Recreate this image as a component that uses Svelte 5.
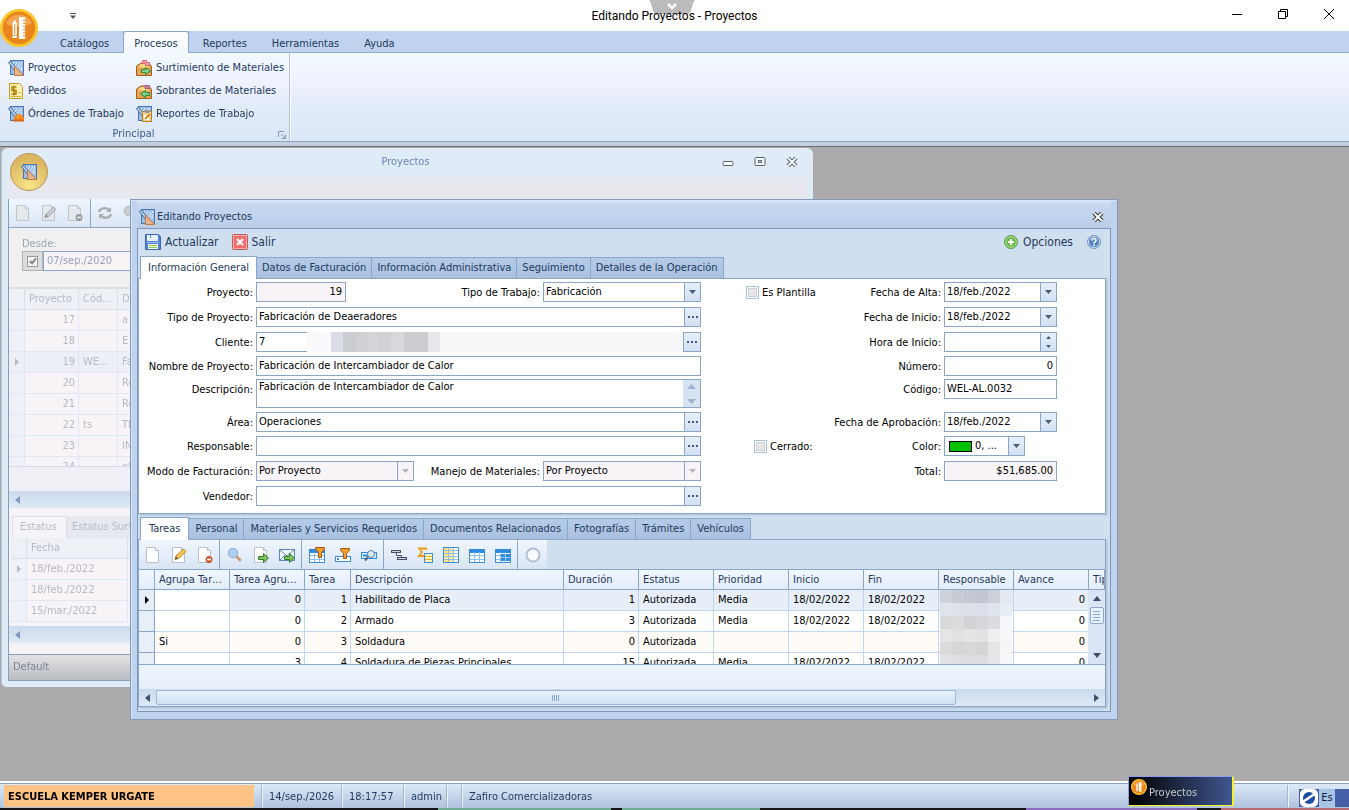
<script>
  let menuActivo = $state('Procesos');
  let seccionActiva = $state('Información General');
  let detalleActivo = $state('Tareas');

  const menus = ['Catálogos', 'Procesos', 'Reportes', 'Herramientas', 'Ayuda'];

  const principal = [
    { icono: 'proyecto', texto: 'Proyectos' },
    { icono: 'entrada', texto: 'Surtimiento de Materiales' },
    { icono: 'pedido', texto: 'Pedidos' },
    { icono: 'salida', texto: 'Sobrantes de Materiales' },
    { icono: 'orden', texto: 'Órdenes de Trabajo' },
    { icono: 'reporte', texto: 'Reportes de Trabajo' }
  ];

  const secciones = [
    'Información General',
    'Datos de Facturación',
    'Información Administrativa',
    'Seguimiento',
    'Detalles de la Operación'
  ];

  const detalles = [
    'Tareas',
    'Personal',
    'Materiales y Servicios Requeridos',
    'Documentos Relacionados',
    'Fotografías',
    'Trámites',
    'Vehículos'
  ];

  const herramientas = [
    ['nuevo', 'editar', 'borrar'],
    ['buscar', 'exportar', 'correo'],
    ['filtro', 'filtroFila', 'buscarFila'],
    ['agrupar', 'suma', 'columnas', 'tabla', 'tablaPie'],
    ['circulo']
  ];

  const columnas = [
    'Agrupa Tareas', 'Tarea Agrupadora', 'Tarea', 'Descripción', 'Duración', 'Estatus',
    'Prioridad', 'Inicio', 'Fin', 'Responsable', 'Avance', 'Tipo'
  ];
  const numericas = [1, 2, 4, 10];

  const tareas = [
    ['', '0', '1', 'Habilitado de Placa', '1', 'Autorizada', 'Media', '18/02/2022', '18/02/2022', '', '0', ''],
    ['', '0', '2', 'Armado', '3', 'Autorizada', 'Media', '18/02/2022', '18/02/2022', '', '0', ''],
    ['Si', '0', '3', 'Soldadura', '0', 'Autorizada', '', '', '', '', '0', ''],
    ['', '3', '4', 'Soldadura de Piezas Principales', '15', 'Autorizada', 'Media', '18/02/2022', '18/02/2022', '', '0', '']
  ];

  const mosaico = [
    '#cdd1da', '#c8cbd4', '#c4c8d2', '#c4c7d1', '#cbd0d9', '#e3e9f1',
    '#dfe3ec', '#dde1ea', '#dce0e9', '#dbdfe9', '#dfe4ed', '#e6eef8',
    '#d9d9dc', '#dcdcde', '#d2d3d7', '#d6d7db', '#dadce2', '#f7f8fb',
    '#e5e5e4', '#e1e1e0', '#e4e4e4', '#e2e2e2', '#efefef', '#f8f8f8',
    '#dcdbd9', '#d7d6d4', '#d8d8d7', '#d6d5d3', '#e6e5e4', '#f8f6f4',
    '#e1e2e5', '#dedfe3', '#dcdde1', '#dcdde2', '#e3e5ea', '#f6f7fa'
  ];

  const proyectos = [
    ['17', '', 'a'], ['18', '', 'E'], ['19', 'WEL-AL', 'Fa'], ['20', '', 'Re'],
    ['21', '', 'Re'], ['22', 'ts', 'TR'], ['23', '', 'IN'], ['24', '', 'el']
  ];
  const fechas = ['18/feb./2022', '18/feb./2022', '15/mar./2022'];
</script>

{#snippet plano()}
  <rect x="2.500" y="0.500" width="13" height="14" fill="#9dbfe8" stroke="#4a76ae" />
  <path d="M5 3h1M8 3h1M11 3h1M13 3h1M7 5h1M10 5h1M12 5h1M9 7h1M11 7h1M13 7h1M12 9h2" stroke="#fff" />
  <path d="M0.500 2.500l2-1.500 6 7.500v2.500l-2-.5z" fill="#b9d0ea" stroke="#3f6799" />
{/snippet}

{#snippet hoja()}
  <path d="M1.500 0.500h9l3 3v12h-12z" fill="#fff" stroke="#b9bfca" />
  <path d="M10.500 0.500v3h3" fill="#eef1f6" stroke="#b9bfca" />
{/snippet}

{#snippet flecha()}
  <path d="M5.500 9.500h5v-3l5 4.500-5 4.500v-3h-5z" fill="#7cc45a" stroke="#2f7d28" />
{/snippet}

{#snippet embudo()}
  <path d="M6.500 0.500h9v1.500l-3 3.500v5h-3v-5l-3-3.500z" fill="#f2a02c" stroke="#a8550c" />
{/snippet}

{#snippet rejilla()}
  <rect x="0.500" y="2.500" width="15" height="13" fill="#fff" stroke="#3a8fd8" />
  <path d="M0 4h16" stroke="#2f8be0" stroke-width="4" />
  <path d="M1 8.500h14M1 12.500h14M5.500 5v10M10.500 5v10" stroke="#8cc0ee" />
{/snippet}

{#snippet icono(nombre, lado = 16)}
  <svg class="icono" width={lado} height={lado} viewBox="0 0 16 16" fill="none" aria-hidden="true">
    {#if nombre === 'proyecto'}
      {@render plano()}
      <path d="M6.500 6v9.500h9z" fill="#efb482" stroke="#bd7a48" />
      <path d="M8.500 12v1.500h1.500z" fill="#9dbfe8" />
    {:else if nombre === 'orden'}
      {@render plano()}
      <path d="M6 14c0-4 2-6 5-6s5 2 5 6z" fill="#f58a1c" />
      <path d="M5 14.500h11" stroke="#d9650d" stroke-width="2" />
      <path d="M10 9v3" stroke="#ffc274" />
    {:else if nombre === 'reporte'}
      {@render plano()}
      <rect x="6.500" y="5.500" width="9" height="10" fill="#f6d48c" stroke="#b87f22" />
      <rect x="9" y="4" width="4" height="3" fill="#8f97a8" />
      <path d="M8 9h5v5H8z" fill="#fff" />
      <path d="M9 13l5-5" stroke="#d98a1c" stroke-width="2" />
    {:else if nombre === 'pedido'}
      <path d="M1.500 0.500h10l3 3v12h-13z" fill="#fff2ae" stroke="#c39a28" />
      <path d="M8.500 4H4v3.500h4V11H3.500M6 2.500v10" stroke="#b07f0c" stroke-width="1.500" />
      <path d="M10 9.500h3M3 13.500h10" stroke="#d8b545" />
    {:else if nombre === 'entrada' || nombre === 'salida'}
      <path d="M0.500 15.500V7q0-1.500 1.500-2l3-2h6q4.500 1.500 4.500 4v8.500z" fill="#eba350" stroke="#9a5f20" />
      <path d="M2 7.500q0-1.500 3-3.500h4q4 1 4 3.500z" fill="#ffd984" />
      {#if nombre === 'entrada'}
        <path d="M6.500 0.500h4v2h3v3h-4v-2h-3z" fill="#f5a0a8" stroke="#e0607a" />
        <path d="M5.500 9.500h4v-2l5 3.500-5 3.500v-2h-4z" fill="#83d38a" stroke="#28853c" />
      {:else}
        <path d="M9 2.500h4.500v3H9z" fill="#c87fa0" stroke="#a35a80" />
        <path d="M13.500 9.500h-4v-2l-5 3.500 5 3.500v-2h4z" fill="#83d38a" stroke="#28853c" />
      {/if}
    {:else if nombre === 'guardar'}
      <path d="M0.500 0.500h13l2 2v13h-15z" fill="#4f82d0" stroke="#3a68b4" />
      <rect x="2" y="1" width="11" height="6" fill="#e9f1fb" />
      <rect x="5" y="1" width="1" height="3" fill="#4f82d0" />
      <rect x="2" y="8" width="12" height="1" fill="#9fc0ec" />
      <rect x="3" y="10" width="10" height="5" fill="#f4f8fd" />
      <path d="M4 11.500h8M4 13.500h8" stroke="#8cc63f" />
    {:else if nombre === 'salir'}
      <rect x="0.500" y="0.500" width="15" height="15" rx="1" fill="#f26a6a" stroke="#b8605a" />
      <rect x="1.500" y="1.500" width="13" height="13" stroke="#f9b0ae" />
      <path d="M5 5l6 6M11 5l-6 6" stroke="#fff" stroke-width="2.400" />
    {:else if nombre === 'mas'}
      <circle cx="8" cy="8" r="6.500" fill="#6dbb48" stroke="#5f9a4a" />
      <circle cx="8" cy="8" r="5.300" stroke="#b9e2a4" />
      <path d="M8 5v6M5 8h6" stroke="#fff" stroke-width="2" />
    {:else if nombre === 'ayuda'}
      <circle cx="8" cy="8" r="6.500" fill="#5583c4" stroke="#7c9cca" />
      <circle cx="8" cy="8" r="5.500" stroke="#d5e4f6" />
      <path d="M6 6.500c0-3 4.200-2.500 4 0 0 1.500-2 1.200-2 3M8 10.500v1.500" stroke="#fff" stroke-width="1.600" />
    {:else if nombre === 'nuevo'}
      {@render hoja()}
    {:else if nombre === 'editar'}
      {@render hoja()}
      <path d="M4 12.500l1-3.500L12.500 2 15 4.500 7.500 11.500z" fill="#f7c64c" stroke="#b9822a" />
      <path d="M4 12.500l1-3 2 2z" fill="#5b4a3c" />
    {:else if nombre === 'borrar'}
      {@render hoja()}
      <circle cx="12" cy="12.500" r="3" fill="#e8622c" stroke="#b8441a" />
      <path d="M10 12.500h4" stroke="#fff" stroke-width="1.500" />
    {:else if nombre === 'buscar'}
      <circle cx="6" cy="6" r="4.500" fill="#a9d2f6" stroke="#9db6d8" stroke-width="1.500" />
      <path d="M10 10l3 3" stroke="#c9986c" stroke-width="2.500" stroke-linecap="round" />
    {:else if nombre === 'exportar'}
      {@render hoja()}
      {@render flecha()}
    {:else if nombre === 'correo'}
      <rect x="0.500" y="2.500" width="15" height="11" fill="#eef5fd" stroke="#5b87bd" />
      <path d="M1 3l7 6 7-6M1 13l5-5" stroke="#5b87bd" />
      {@render flecha()}
    {:else if nombre === 'filtro'}
      {@render rejilla()}
      {@render embudo()}
    {:else if nombre === 'filtroFila'}
      <rect x="0.500" y="9.500" width="15" height="5" fill="#fff" stroke="#3a8fd8" />
      <path d="M2 11h2v2H2z" fill="#3a8fd8" />
      <g transform="translate(-1 1)">{@render embudo()}</g>
    {:else if nombre === 'buscarFila'}
      <rect x="0.500" y="5.500" width="15" height="6" fill="#d5ecfb" stroke="#2f8be0" />
      <path d="M2 8.500h5" stroke="#2f8be0" stroke-width="2" />
      <circle cx="10" cy="7" r="3.500" fill="#dcebf8" stroke="#5b7ca8" />
      <path d="M7 10l-3 3.500" stroke="#5b5f70" stroke-width="2" />
    {:else if nombre === 'agrupar'}
      <rect x="0.500" y="3.500" width="9" height="2" fill="#c9cede" stroke="#4a4f66" />
      <rect x="6.500" y="10.500" width="9" height="2" fill="#c9cede" stroke="#4a4f66" />
      <path d="M5.500 6v2.500h5V10" stroke="#4a4f66" />
    {:else if nombre === 'suma'}
      <path d="M9 3V1.500H2L5 5 2 9H9V7.500" stroke="#f09a18" stroke-width="1.800" />
      <rect x="7.500" y="6.500" width="8" height="9" fill="#fff6b8" stroke="#3a8fd8" />
      <path d="M8 9.500h7M8 12.500h7" stroke="#e0b42c" />
    {:else if nombre === 'columnas'}
      <rect x="0.500" y="0.500" width="15" height="15" fill="#fff" stroke="#3a8fd8" />
      <path d="M1 1h5v14H1zM6 1h4v14H6z" fill="#ffe88a" />
      <path d="M1 3.500h14M1 6.500h14M1 9.500h14M1 12.500h14M5.500 1v14M10.500 1v14" stroke="#8fbfe8" />
    {:else if nombre === 'tabla'}
      {@render rejilla()}
    {:else if nombre === 'tablaPie'}
      {@render rejilla()}
      <path d="M6 7h9v7H6z" fill="#2f8be0" />
      <path d="M6 10.500h9M10.500 7v7" stroke="#9accf5" />
    {:else if nombre === 'circulo'}
      <circle cx="8" cy="8" r="6.500" fill="#f8fafd" stroke="#b4bfd3" stroke-width="2" />
    {:else if nombre === 'refrescar'}
      <path d="M2 7c1-4 7-5 10-2M14 9c-1 4-7 5-10 2" stroke="#8f9399" stroke-width="2.500" />
      <path d="M14 2v5H9zM2 14V9h5z" fill="#8f9399" />
    {:else if nombre === 'app'}
      <circle cx="8" cy="8" r="7.400" fill="#e8851c" stroke="#fbc62c" stroke-width="1.200" />
      <path d="M2.500 6a6 6 0 0 1 11 0c-3 1.500-8 2-11 0z" fill="#f4a552" />
      <path d="M8 3.400h2.600v9.200H8z" fill="#fff" />
      <path d="M9.700 4.800h1M9.700 6.100h1M9.700 7.400h1M9.700 8.700h1M9.700 10h1M9.700 11.300h1" stroke="#e8851c" stroke-width=".4" />
      <path d="M5.300 6l.9-1.600L7.100 6v5H5.300z" fill="#fff" />
      <path d="M6.200 6.300v4.400" stroke="#e8851c" stroke-width=".4" />
      <path d="M5.300 11.300h1.800v.9H5.300z" fill="#fff" />
    {/if}
  </svg>
{/snippet}

{#snippet triangulo()}
  <svg width="7" height="4" viewBox="0 0 7 4" aria-hidden="true"><path d="M0 0h7L3.500 4z" fill="currentColor" /></svg>
{/snippet}

{#snippet busqueda(id, valor)}
  <div class="campo">
    <input {id} type="text" value={valor} />
    <button type="button" class="boton puntos" aria-label="Buscar"><i></i><i></i><i></i></button>
  </div>
{/snippet}

{#snippet fecha(id, valor)}
  <div class="campo">
    <input {id} type="text" value={valor} />
    <button type="button" class="boton" aria-label="Calendario">{@render triangulo()}</button>
  </div>
{/snippet}

{#snippet lista(id, valor, deshabilitado)}
  <div class="campo" class:apagado={deshabilitado}>
    <select {id} disabled={deshabilitado}><option>{valor}</option></select>
    <span class="boton">{@render triangulo()}</span>
  </div>
{/snippet}

<div class="escritorio">
  <header class="titulo">
    <button type="button" class="rapido" aria-label="Personalizar barra">
      <svg width="6" height="6" viewBox="0 0 6 6"><path d="M0 .5h6" stroke="#555" /><path d="M0 2.500h6L3 6z" fill="#555" /></svg>
    </button>
    <h1>Editando Proyectos - Proyectos</h1>
    <div class="asa"><svg width="46" height="14" viewBox="0 0 46 14"><path d="M0 0h46c-3 2-3 14-7 14H7C3 14 3 2 0 0z" fill="#bbb" /><path d="M19 4l4 4 4-4" stroke="#fff" stroke-width="2.500" fill="none" /></svg></div>
    <div class="controles">
      <button type="button" aria-label="Minimizar"><svg width="12" height="12" viewBox="0 0 12 12"><path d="M1 6.500h10" stroke="#000" /></svg></button>
      <button type="button" aria-label="Restaurar"><svg width="12" height="12" viewBox="0 0 12 12" fill="none" stroke="#000"><path d="M1.500 3.500h7v7h-7zM3.500 3.500v-2h7v7h-2" /></svg></button>
      <button type="button" aria-label="Cerrar"><svg width="12" height="12" viewBox="0 0 12 12"><path d="M1 1l10 10M11 1L1 11" stroke="#000" /></svg></button>
    </div>
  </header>
  <button type="button" class="orbe" aria-label="Aplicación">{@render icono('app', 38)}</button>

  <nav class="menu">
    {#each menus as m}
      <button type="button" class:activo={m === menuActivo} onclick={() => (menuActivo = m)}>{m}</button>
    {/each}
  </nav>

  <section class="cinta">
    <div class="grupo">
      <div class="acciones">
        {#each principal as p}
          <button type="button">{@render icono(p.icono)}{p.texto}</button>
        {/each}
      </div>
      <div class="pie-grupo">
        Principal
        <svg class="lanzador" width="8" height="8" viewBox="0 0 8 8" fill="none" stroke="#8a97ab"><path d="M.5 6V.5H6M3 3l4 4M7.500 3.500v4h-4" /></svg>
      </div>
    </div>
  </section>

  <main class="mdi">
    <section class="ventana-lista">
      <header>
        <span class="orbe-ventana">{@render icono('proyecto')}</span>
        <h2>Proyectos</h2>
        <div class="controles-lista">
          <button type="button" aria-label="Minimizar ventana"><svg width="12" height="10" viewBox="0 0 12 10"><rect x="1" y="4.500" width="10" height="4" rx="1" fill="#fff" stroke="#55606f" /></svg></button>
          <button type="button" aria-label="Maximizar ventana"><svg width="12" height="10" viewBox="0 0 12 10"><rect x="1" y=".5" width="10" height="8" rx="1" fill="#fff" stroke="#55606f" /><rect x="4.500" y="3.500" width="3" height="2" fill="none" stroke="#55606f" /></svg></button>
          <button type="button" aria-label="Cerrar ventana"><svg width="12" height="10" viewBox="0 0 12 10"><path d="M2 1l8 8M10 1L2 9" stroke="#55606f" stroke-width="4" /><path d="M2 1l8 8M10 1L2 9" stroke="#fff" stroke-width="2" /></svg></button>
        </div>
      </header>
      <div class="franja"></div>
      <div class="contenido">
        <div class="barra-lista">
          <button type="button" disabled aria-label="Nuevo">{@render icono('nuevo')}</button>
          <button type="button" disabled aria-label="Editar">{@render icono('editar')}</button>
          <button type="button" disabled aria-label="Borrar">{@render icono('borrar')}</button>
          <span class="separador"></span>
          <button type="button" disabled aria-label="Refrescar">{@render icono('refrescar')}</button>
          <button type="button" disabled aria-label="Buscar">{@render icono('buscar')}</button>
        </div>
        <div class="filtro">
          <label for="desde">Desde:</label>
          <div class="desde">
            <span class="marca"><input type="checkbox" checked disabled aria-label="Usar fecha" /></span>
            <input id="desde" type="text" value="07/sep./2020" disabled />
          </div>
        </div>
        <div class="velo alto">
          <table>
            <colgroup><col class="c-ind" /><col class="c-proy" /><col class="c-cod" /><col /></colgroup>
            <thead><tr><th></th><th>Proyecto</th><th>Código</th><th>Descripción</th></tr></thead>
            <tbody>
              {#each proyectos as p, i}
                <tr class:actual={i === 2}>
                  <td class="ind">{#if i === 2}<span class="cursor"></span>{/if}</td>
                  <td class="num">{p[0]}</td><td>{p[1]}</td><td>{p[2]}</td>
                </tr>
              {/each}
            </tbody>
          </table>
        </div>
        <div class="resto"></div>
        <div class="rodillo"><span class="izq"></span></div>
        <div class="pestanas-lista"><span class="activo">Estatus</span><span>Estatus Surtimiento</span></div>
        <div class="velo bajo">
          <table>
            <colgroup><col class="c-ind" /><col class="c-fecha" /><col /></colgroup>
            <thead><tr><th></th><th>Fecha</th><th></th></tr></thead>
            <tbody>
              {#each fechas as f, i}
                <tr><td class="ind">{#if i === 0}<span class="cursor"></span>{/if}</td><td>{f}</td><td></td></tr>
              {/each}
            </tbody>
          </table>
        </div>
        <div class="rodillo"><span class="izq"></span></div>
        <footer>Default</footer>
      </div>
    </section>

    <section class="dialogo">
      <header>
        {@render icono('proyecto')}
        <h2>Editando Proyectos</h2>
        <button type="button" aria-label="Cerrar diálogo"><svg width="12" height="10" viewBox="0 0 12 10"><path d="M2 1l8 8M10 1L2 9" stroke="#333" stroke-width="4" /><path d="M2 1l8 8M10 1L2 9" stroke="#fff" stroke-width="2" /></svg></button>
      </header>
      <div class="marco">
        <div class="comandos">
          <button type="button">{@render icono('guardar')}Actualizar</button>
          <button type="button">{@render icono('salir')}Salir</button>
          <button type="button" class="opciones">{@render icono('mas')}Opciones</button>
          <button type="button" aria-label="Ayuda">{@render icono('ayuda')}</button>
        </div>

        <div class="pestanas">
          {#each secciones as s}
            <button type="button" class:activo={s === seccionActiva} onclick={() => (seccionActiva = s)}>{s}</button>
          {/each}
        </div>
        <form class="panel formulario">
          <label for="proyecto">Proyecto:</label>
          <div class="doble">
            <div class="campo corto apagado"><input id="proyecto" class="num" type="text" value="19" readonly /></div>
            <label for="trabajo">Tipo de Trabajo:</label>
            <div class="medio">{@render lista('trabajo', 'Fabricación', false)}</div>
          </div>
          <div class="lado">
            <input id="plantilla" type="checkbox" /><label for="plantilla">Es Plantilla</label>
            <label class="derecha" for="alta">Fecha de Alta:</label>
          </div>
          {@render fecha('alta', '18/feb./2022')}

          <label for="tipo">Tipo de Proyecto:</label>
          {@render busqueda('tipo', 'Fabricación de Deaeradores')}
          <label for="inicio">Fecha de Inicio:</label>
          {@render fecha('inicio', '18/feb./2022')}

          <label for="cliente">Cliente:</label>
          <div class="cliente">
            <div class="campo"><input id="cliente" type="text" value="7" /></div>
            <div class="oculto"></div>
            <button type="button" class="boton puntos" aria-label="Buscar cliente"><i></i><i></i><i></i></button>
          </div>
          <label for="hora">Hora de Inicio:</label>
          <div class="campo">
            <input id="hora" type="text" value="" />
            <button type="button" class="boton giro" aria-label="Cambiar hora">
              <svg width="5" height="12" viewBox="0 0 5 12"><path d="M0 3h5L2.500 0zM0 9h5L2.500 12z" fill="currentColor" /></svg>
            </button>
          </div>

          <label for="nombre">Nombre de Proyecto:</label>
          <div class="campo"><input id="nombre" type="text" value="Fabricación de Intercambiador de Calor" /></div>
          <label for="numero">Número:</label>
          <div class="campo"><input id="numero" class="num" type="text" value="0" /></div>

          <label for="descripcion">Descripción:</label>
          <div class="campo texto">
            <textarea id="descripcion">Fabricación de Intercambiador de Calor</textarea>
            <span class="desliza">
              <svg width="9" height="20" viewBox="0 0 9 20"><path d="M0 5h9L4.500 0zM0 15h9L4.500 20z" fill="#a3b3cd" /></svg>
            </span>
          </div>
          <label for="codigo">Código:</label>
          <div class="campo"><input id="codigo" type="text" value="WEL-AL.0032" /></div>

          <label for="area">Área:</label>
          {@render busqueda('area', 'Operaciones')}
          <label for="aprobacion">Fecha de Aprobación:</label>
          {@render fecha('aprobacion', '18/feb./2022')}

          <label for="responsable">Responsable:</label>
          {@render busqueda('responsable', '')}
          <div class="lado cerrado">
            <input id="cerrado" type="checkbox" /><label for="cerrado">Cerrado:</label>
            <label class="derecha" for="color">Color:</label>
          </div>
          <div class="campo color">
            <span class="muestra"></span>
            <select id="color"><option>0, ...</option></select>
            <span class="boton">{@render triangulo()}</span>
          </div>

          <label for="modo">Modo de Facturación:</label>
          <div class="doble">
            <div class="medio">{@render lista('modo', 'Por Proyecto', true)}</div>
            <label for="manejo">Manejo de Materiales:</label>
            <div class="medio">{@render lista('manejo', 'Por Proyecto', true)}</div>
          </div>
          <label for="total">Total:</label>
          <div class="campo apagado"><input id="total" class="num" type="text" value="$51,685.00" readonly /></div>

          <label for="vendedor">Vendedor:</label>
          {@render busqueda('vendedor', '')}
        </form>

        <div class="pestanas segunda">
          {#each detalles as d}
            <button type="button" class:activo={d === detalleActivo} onclick={() => (detalleActivo = d)}>{d}</button>
          {/each}
        </div>
        <div class="panel detalle">
          <div class="herramientas">
            {#each herramientas as grupo}
              <div class="bloque">
                {#each grupo as h}
                  <button type="button" aria-label={h}>{@render icono(h)}</button>
                {/each}
              </div>
            {/each}
          </div>
          <div class="tareas">
            <table>
              <colgroup>
                <col class="t-ind" /><col class="t-75" /><col class="t-75" /><col class="t-46" /><col />
                {#each Array(7) as _}<col class="t-75" />{/each}
                <col class="t-ind" />
              </colgroup>
              <thead>
                <tr><th></th>{#each columnas as c, i}<th class:corte={i === 11}>{c}</th>{/each}</tr>
              </thead>
              <tbody>
                {#each tareas as t, i}
                  <tr class:actual={i === 0} class:agrupa={t[0] === 'Si'}>
                    <td class="ind">{#if i === 0}<span class="cursor"></span>{/if}</td>
                    {#each t as celda, j}<td class:num={numericas.includes(j)}>{celda}</td>{/each}
                  </tr>
                {/each}
              </tbody>
            </table>
            <div class="mosaico">
              {#each mosaico as color}<i style="background: {color}"></i>{/each}
            </div>
            <div class="vertical">
              <span class="arriba"></span>
              <span class="pulgar"></span>
              <span class="abajo"></span>
            </div>
          </div>
          <div class="resto"></div>
          <div class="rodillo">
            <span class="izq"></span>
            <span class="pulgar"></span>
            <span class="der"></span>
          </div>
        </div>
      </div>
    </section>
  </main>

  <footer class="estado">
    <strong>ESCUELA KEMPER URGATE</strong>
    <span class="e-fecha">14/sep./2026</span>
    <span class="e-hora">18:17:57</span>
    <span class="e-usuario">admin</span>
    <span class="e-vacio"></span>
    <span class="e-empresa">Zafiro Comercializadoras</span>
    <span class="e-fin"></span>
  </footer>
  <div class="orilla"></div>

  <div class="aviso">{@render icono('app')}<span>Proyectos</span></div>
  <div class="idioma">
    <svg width="18" height="18" viewBox="0 0 18 18"><rect width="18" height="18" rx="5" fill="#fff" /><circle cx="9" cy="9" r="6" fill="#1d4fa0" /><path d="M3.500 12.500l11-7.500" stroke="#fff" stroke-width="2.500" fill="none" /></svg>
    <span>Es</span>
  </div>
</div>

<style>
  :global(body) {
    margin: 0;
  }
  .escritorio {
    --linea: #8aa5c6;
    --tinta: #1e395b;
    position: relative;
    display: flex;
    flex-direction: column;
    min-height: 100vh;
    overflow: hidden;
    font: 11px/14px 'DejaVu Sans Condensed', 'Noto Sans', sans-serif;
    color: var(--tinta);
  }
  .escritorio *,
  .escritorio *::before {
    box-sizing: border-box;
  }
  button,
  input,
  select,
  textarea {
    margin: 0;
    padding: 0;
    border: 0;
    border-radius: 0;
    background: none;
    font: inherit;
    color: inherit;
  }
  h1,
  h2 {
    margin: 0;
    font-size: 11px;
    font-weight: 400;
  }
  .icono {
    flex: none;
    display: block;
  }

  /* barra de título */
  .titulo {
    display: grid;
    grid-template-columns: 1fr auto 1fr;
    align-items: center;
    height: 31px;
    background: #fff;
    color: #000;
  }
  .titulo h1 {
    font: 12px/16px Roboto, 'Noto Sans', sans-serif;
  }
  .rapido {
    justify-self: start;
    margin-left: 70px;
    line-height: 0;
  }
  .asa {
    position: absolute;
    top: 0;
    left: 649px;
    line-height: 0;
    mix-blend-mode: multiply;
  }
  .controles {
    display: flex;
    justify-self: end;
    gap: 34px;
    padding: 0 14px 4px 0;
    line-height: 0;
  }
  .orbe {
    position: absolute;
    top: 9px;
    left: 0;
    z-index: 1;
  }

  /* menú y cinta */
  .menu {
    display: flex;
    gap: 3px;
    height: 22px;
    padding-left: 49px;
    background: #bfd3ef;
    border-bottom: 1px solid #8fabcf;
  }
  .menu button {
    height: 22px;
    padding: 2px 10px 0;
    border: 1px solid transparent;
    border-bottom: 0;
    border-radius: 3px 3px 0 0;
  }
  .menu .activo {
    background: linear-gradient(#fff, #f2f8ff);
    border-color: var(--linea);
  }
  .cinta {
    display: flex;
    background: linear-gradient(#f2f9ff, #eef2fe 35%, #e2ebf8 60%, #dce6f7);
    border-bottom: 1px solid #8ba3c0;
  }
  .grupo {
    width: 290px;
    border-right: 1px solid #b5c3d9;
    box-shadow: 1px 0 #fff;
  }
  .acciones {
    display: grid;
    grid-template-columns: 128px 1fr;
    grid-auto-rows: 23px;
    padding: 3px 0 0 8px;
  }
  .acciones button {
    display: flex;
    align-items: center;
    gap: 4px;
    white-space: nowrap;
  }
  .pie-grupo {
    position: relative;
    height: 16px;
    padding-right: 22px;
    line-height: 18px;
    text-align: center;
    color: #3e5c87;
  }
  .lanzador {
    position: absolute;
    right: 3px;
    bottom: 2px;
  }

  /* área de ventanas */
  .mdi {
    position: relative;
    flex: 1;
    background: #acaaac;
    border-top: 4px solid #c3d0df;
    border-bottom: 2px solid #fff;
    box-shadow: inset 0 1px #6d6d6d;
  }
  .ventana-lista {
    position: absolute;
    top: 2px;
    left: 1px;
    width: 812px;
    padding: 0 6px 6px;
    background: #dfebf6;
    border-left: 1px solid #b3c3d6;
    border-radius: 6px 6px 5px 5px;
    color: #97a3b2;
  }
  .ventana-lista > header {
    position: relative;
    height: 29px;
    padding: 7px 4px 0 0;
    text-align: center;
  }
  .ventana-lista h2 {
    color: #6986b5;
  }
  .orbe-ventana {
    position: absolute;
    top: 5px;
    left: 2px;
    display: grid;
    place-items: center;
    width: 38px;
    height: 38px;
    border: 1px solid #b99355;
    border-radius: 50%;
    background: radial-gradient(circle at 50% 90%, #f8e58c, #dcb560 75%);
    z-index: 1;
  }
  .controles-lista {
    position: absolute;
    top: 9px;
    right: 9px;
    display: flex;
    gap: 20px;
    line-height: 0;
  }
  .contenido {
    border: 1px solid #8c9cb5;
    border-top: 0;
    background: #f6f3f7;
  }
  .franja {
    height: 22px;
    background: #e7e9ee;
  }
  .barra-lista {
    display: flex;
    align-items: center;
    height: 29px;
    padding-left: 1px;
    background: linear-gradient(#eef6fe, #dce7f6);
    border-bottom: 1px solid var(--linea);
  }
  .barra-lista button {
    display: grid;
    place-items: center;
    width: 26px;
    opacity: 0.6;
    filter: grayscale(1) brightness(0.9);
  }
  .separador {
    width: 1px;
    height: 28px;
    margin: 0 1px 0 2px;
    background: var(--linea);
  }
  .filtro {
    height: 61px;
    padding: 9px 0 0 13px;
    background: #f0f0f0;
    border-bottom: 2px solid #dedde0;
  }
  .desde {
    display: flex;
    height: 20px;
  }
  .desde > input {
    width: 110px;
    padding-left: 3px;
    border: 1px solid var(--linea);
    background: #f7f3f7;
  }
  .marca {
    display: grid;
    place-items: center;
    width: 21px;
    border: 1px solid #b4b4b4;
    background: #dcdcdc;
  }
  .marca input {
    appearance: none;
    position: relative;
    width: 11px;
    height: 11px;
    border: 1px solid #999;
    background: #f3f3f3;
  }
  .marca input::before {
    content: '';
    position: absolute;
    top: 0;
    left: 3px;
    width: 4px;
    height: 7px;
    border: solid #888;
    border-width: 0 2px 2px 0;
    transform: rotate(40deg);
  }

  table {
    width: 100%;
    table-layout: fixed;
    border-collapse: separate;
    border-spacing: 0;
  }
  th,
  td {
    height: 21px;
    padding: 0 4px;
    overflow: hidden;
    text-align: left;
    text-overflow: ellipsis;
    white-space: nowrap;
    font-weight: 400;
  }
  td.num {
    padding-right: 3px;
    text-align: right;
  }
  .velo {
    overflow: hidden;
    color: #b7b9c0;
  }
  .velo th {
    background: #edf1f6;
    border: solid #d8dfe9;
    border-width: 0 1px 1px 0;
  }
  .velo td {
    background: #f7f3f7;
    border: solid #dfe6f4;
    border-width: 0 1px 1px 0;
  }
  .velo .ind {
    background: #eef1f7;
  }
  .velo .actual td {
    background: #edeff7;
  }
  .alto {
    height: 178px;
    border-bottom: 1px solid #d3d9e3;
  }
  .bajo {
    height: 88px;
    margin-left: 2px;
  }
  .c-ind {
    width: 16px;
  }
  .c-proy {
    width: 54px;
  }
  .c-cod {
    width: 39px;
  }
  .c-fecha {
    width: 101px;
  }
  .ind {
    padding: 0;
  }
  .cursor {
    display: block;
    width: 0;
    margin: 0 auto;
    border: solid transparent;
    border-width: 4px 0 4px 4px;
    border-left-color: currentColor;
  }
  .resto {
    height: 24px;
    background: linear-gradient(#edf4fd, #e6effb);
  }
  .ventana-lista .resto {
    background: #eef0f6;
  }
  .rodillo {
    display: flex;
    align-items: center;
    height: 17px;
    background: linear-gradient(#cbdaec, #dfe9f7);
    color: #3f4d70;
  }
  .izq,
  .der {
    flex: none;
    width: 5px;
    margin: 0 6px;
    border: solid transparent;
    border-width: 4px 5px 4px 0;
    border-right-color: currentColor;
  }
  .der {
    border-width: 4px 0 4px 5px;
    border-right-color: transparent;
    border-left-color: currentColor;
  }
  .ventana-lista .rodillo {
    color: #8398bb;
  }
  .pestanas-lista {
    display: flex;
    height: 30px;
    padding: 8px 0 0 3px;
    line-height: 20px;
    color: #b6bcc8;
  }
  .pestanas-lista span {
    padding: 1px 5px 0;
    background: #e6eaf0;
    border-bottom: 1px solid #dde1e8;
    white-space: nowrap;
  }
  .pestanas-lista .activo {
    width: 55px;
    padding: 0 7px;
    background: #f7f4f8;
    border: 1px solid #dbe0e8;
    border-bottom: 0;
  }
  .ventana-lista footer {
    height: 26px;
    margin-top: 11px;
    padding: 5px 4px;
    background: linear-gradient(#e3e3e5, #b9bcc1);
    border-top: 1px solid #8c9cb5;
    color: #7c828c;
  }

  /* diálogo */
  .dialogo {
    position: absolute;
    top: 53px;
    left: 130px;
    width: 988px;
    padding: 0 6px 7px;
    background: #bfd3ee;
    border: 1px solid #8499b7;
    box-shadow: inset 1px 1px #d6e4f6;
  }
  .dialogo > header {
    display: flex;
    align-items: center;
    gap: 2px;
    height: 28px;
    padding: 5px 7px 0 2px;
    background: linear-gradient(#d6e4f6 1px, #c8d6ee 5px, #bfd3ef 60%, #bccce4);
  }
  .dialogo > header button {
    margin-left: auto;
    line-height: 0;
  }
  .marco {
    padding-right: 4px;
    padding-bottom: 4px;
    background: #cfdff0;
    border: 1px solid #7b96bb;
  }
  .comandos {
    display: flex;
    align-items: center;
    gap: 13px;
    height: 26px;
    padding: 0 4px 0 7px;
    font-size: 12px;
  }
  .comandos button {
    display: flex;
    align-items: center;
    gap: 4px;
  }
  .comandos .opciones {
    margin-left: auto;
  }
  .pestanas {
    display: flex;
    align-items: flex-end;
    height: 23px;
    padding-left: 2px;
  }
  .pestanas button {
    height: 21px;
    padding: 0 5px;
    border: 1px solid var(--linea);
    border-left-width: 0;
    border-bottom: 0;
    background: linear-gradient(#b4cbe8, #a9c0e0);
    white-space: nowrap;
  }
  .pestanas .activo {
    position: relative;
    height: 23px;
    margin-bottom: -1px;
    padding: 0 7px 1px;
    border-left-width: 1px;
    background: #fff;
  }
  .segunda {
    margin-top: 2px;
  }
  .segunda button {
    padding: 0 6px;
  }
  .segunda .activo {
    padding: 0 8px 1px;
  }
  .panel {
    border: 1px solid var(--linea);
    box-shadow: 1px 1px 2px #a9b9cf;
  }
  .formulario {
    display: grid;
    grid-template-columns: 114px 445px 1fr 113px;
    grid-template-rows: 25px 25px 24px 23px 33px 24px 25px 25px 20px;
    column-gap: 3px;
    align-items: start;
    padding: 3px 48px 7px 0;
    background: #fff;
    color: #000;
  }
  .formulario > label,
  .derecha {
    text-align: right;
  }
  .formulario label {
    padding-top: 4px;
    line-height: 14px;
    white-space: nowrap;
  }
  .campo {
    display: flex;
    height: 20px;
    border: 1px solid var(--linea);
    background: #fff;
  }
  .campo input,
  .campo select,
  .campo textarea {
    flex: 1;
    min-width: 0;
    padding: 0 2px;
    appearance: none;
    outline: none;
    color: #000;
    opacity: 1;
  }
  .campo textarea {
    resize: none;
    overflow: hidden;
    line-height: 14px;
  }
  .campo input.num {
    padding-right: 3px;
    text-align: right;
  }
  .apagado {
    background: #f7f3f7;
  }
  .texto {
    height: 29px;
  }
  .desliza {
    display: grid;
    place-items: center;
    width: 17px;
    background: #d6e3f3;
    line-height: 0;
  }
  .boton {
    display: flex;
    flex: none;
    align-items: center;
    justify-content: center;
    width: 16px;
    border-left: 1px solid var(--linea);
    background: linear-gradient(#e6effa, #d3e0f2);
    color: #4a5b80;
  }
  .apagado .boton {
    background: none;
    color: #b4b4c0;
  }
  .puntos {
    gap: 2px;
  }
  .puntos i {
    width: 2px;
    height: 2px;
    background: #4a5b80;
  }
  .doble {
    display: flex;
    justify-content: space-between;
  }
  .doble label {
    margin-left: auto;
    padding-right: 3px;
  }
  .corto {
    width: 90px;
  }
  .medio {
    width: 158px;
  }
  .lado {
    display: flex;
    gap: 3px;
    padding-left: 42px;
  }
  .cerrado {
    padding-left: 50px;
  }
  .lado input {
    appearance: none;
    width: 13px;
    height: 13px;
    margin-top: 4px;
    border: 1px solid #a9c0de;
    background: #e9e6eb;
    box-shadow: inset 0 0 0 1px #fff, inset 0 0 0 2px #cfcdd6;
  }
  .derecha {
    margin-left: auto;
  }
  .cliente {
    display: flex;
    height: 20px;
  }
  .cliente .campo {
    width: 51px;
    border-right: 0;
  }
  .oculto {
    flex: 1;
    background: linear-gradient(
      90deg,
      #f9fafb 24px, #dbdee7 24px 36px, #cbccd1 36px 48px, #cfd0d4 48px 60px, #d3d4d7 60px 72px,
      #d0d1d5 72px 84px, #d8d9db 84px 97px, #cbccd0 97px 121px, #e6e8ed 121px 133px, #f7f8fa 133px
    );
  }
  .cliente .boton {
    width: 18px;
    border: 1px solid var(--linea);
  }
  .color {
    width: 81px;
  }
  .color .muestra {
    width: 23px;
    height: 11px;
    margin: 4px 1px 0 4px;
    border: 1px solid #000;
    background: #00c000;
  }

  /* tareas */
  .detalle {
    background: #cfdff0;
  }
  .herramientas {
    display: flex;
    height: 29px;
  }
  .bloque {
    display: flex;
    align-items: center;
    padding: 0 1px 0 2px;
    border-right: 1px solid var(--linea);
    background: linear-gradient(#f0f6fe, #d9e5f5);
  }
  .bloque:first-child {
    padding-left: 1px;
  }
  .bloque:last-child {
    border: 0;
  }
  .bloque button {
    display: grid;
    place-items: center;
    width: 26px;
    height: 26px;
  }
  .tareas {
    position: relative;
    height: 96px;
    overflow: hidden;
    border-top: 1px solid var(--linea);
    border-bottom: 1px solid var(--linea);
    color: #000;
  }
  .tareas th {
    height: 20px;
    background: linear-gradient(#f0f6fe, #e3edfb);
    border: solid var(--linea);
    border-width: 0 1px 1px 0;
    color: var(--tinta);
  }
  .tareas .corte {
    text-overflow: clip;
  }
  .tareas td {
    background: #fff;
    border: solid #c0d5f0;
    border-width: 0 1px 1px 0;
  }
  .tareas td.ind {
    background: #e9eff9;
    border-color: var(--linea);
  }
  .tareas .actual td {
    background: #e7eef7;
  }
  .tareas .actual td:nth-child(2) {
    background: #fff;
  }
  .tareas .agrupa td:not(.ind) {
    background: #fefbf7;
  }
  .t-ind {
    width: 16px;
  }
  .t-75 {
    width: 75px;
  }
  .t-46 {
    width: 46px;
  }
  .mosaico {
    position: absolute;
    top: 20px;
    right: 93px;
    display: grid;
    grid-template-columns: repeat(6, 12px);
    grid-auto-rows: 13px;
  }
  .vertical {
    position: absolute;
    top: 20px;
    right: 0;
    bottom: 0;
    display: flex;
    flex-direction: column;
    align-items: center;
    width: 17px;
    background: #d9e5f5;
    color: #3f4d70;
  }
  .arriba {
    margin: 6px 0;
    border: solid transparent;
    border-width: 0 4px 5px;
    border-bottom-color: currentColor;
  }
  .abajo {
    margin: auto 0 6px;
    border: solid transparent;
    border-width: 5px 4px 0;
    border-top-color: currentColor;
  }
  .vertical .pulgar {
    width: 14px;
    height: 17px;
    border: 1px solid #8aa9d0;
    border-radius: 2px;
    background: repeating-linear-gradient(#8aa9d0 0 1px, transparent 1px 3px) center / 7px 10px no-repeat, #e9f2fc;
  }
  .rodillo .pulgar {
    width: 800px;
    height: 15px;
    border: 1px solid #9cb5d6;
    border-radius: 2px;
    background: repeating-linear-gradient(90deg, #8aa9d0 0 1px, transparent 1px 2px) center / 8px 6px no-repeat,
      linear-gradient(#e9f1fb, #d2e0f3);
  }
  .rodillo .der {
    margin-left: auto;
  }

  /* barra de estado */
  .estado {
    display: flex;
    height: 25px;
    padding: 1px 0 1px 4px;
    border-top: 1px solid #88a2c0;
    background: linear-gradient(#dde9f7, #c5d6ea 50%, #afc3dc);
    line-height: 23px;
  }
  .estado strong {
    width: 250px;
    margin-right: 7px;
    padding-left: 4px;
    background: #ffc485;
    color: #000;
  }
  .estado span {
    border-left: 1px solid #9db4d2;
    box-shadow: inset 1px 0 #eff5fc;
    padding-left: 7px;
  }
  .e-fecha {
    width: 80px;
  }
  .e-hora {
    width: 62px;
  }
  .e-usuario {
    width: 43px;
  }
  .e-vacio {
    width: 15px;
  }
  .estado .e-fin {
    margin-left: auto;
    width: 62px;
  }
  .orilla {
    height: 2px;
    background: linear-gradient(
      90deg,
      #15151a 438px, #6fae92 438px 611px, #15151a 611px 622px, #6fae92 622px 760px, #15151a 760px 1026px,
      #8a6cc0 1026px 1197px, #15151a 1197px 1221px, #b86a70 1221px
    );
  }
  .aviso {
    position: absolute;
    right: 115px;
    bottom: 4px;
    display: flex;
    gap: 2px;
    width: 106px;
    height: 30px;
    padding: 2px;
    border: 1px solid #8c9ef0;
    border-right: 2px solid #f4f02c;
    border-bottom-color: #f4f02c;
    background: linear-gradient(90deg, #000, #3f568f);
    color: #c8c8c8;
  }
  .aviso span {
    padding-top: 7px;
  }
  .idioma {
    position: absolute;
    right: 0;
    bottom: 3px;
    display: flex;
    width: 50px;
    height: 18px;
    background: #4660a8;
    color: #10203c;
    line-height: 18px;
  }
  .idioma svg {
    margin: 0 1px 0 1px;
  }
  .idioma span {
    width: 16px;
    background: #a8c4e4;
    text-align: center;
  }
</style>
